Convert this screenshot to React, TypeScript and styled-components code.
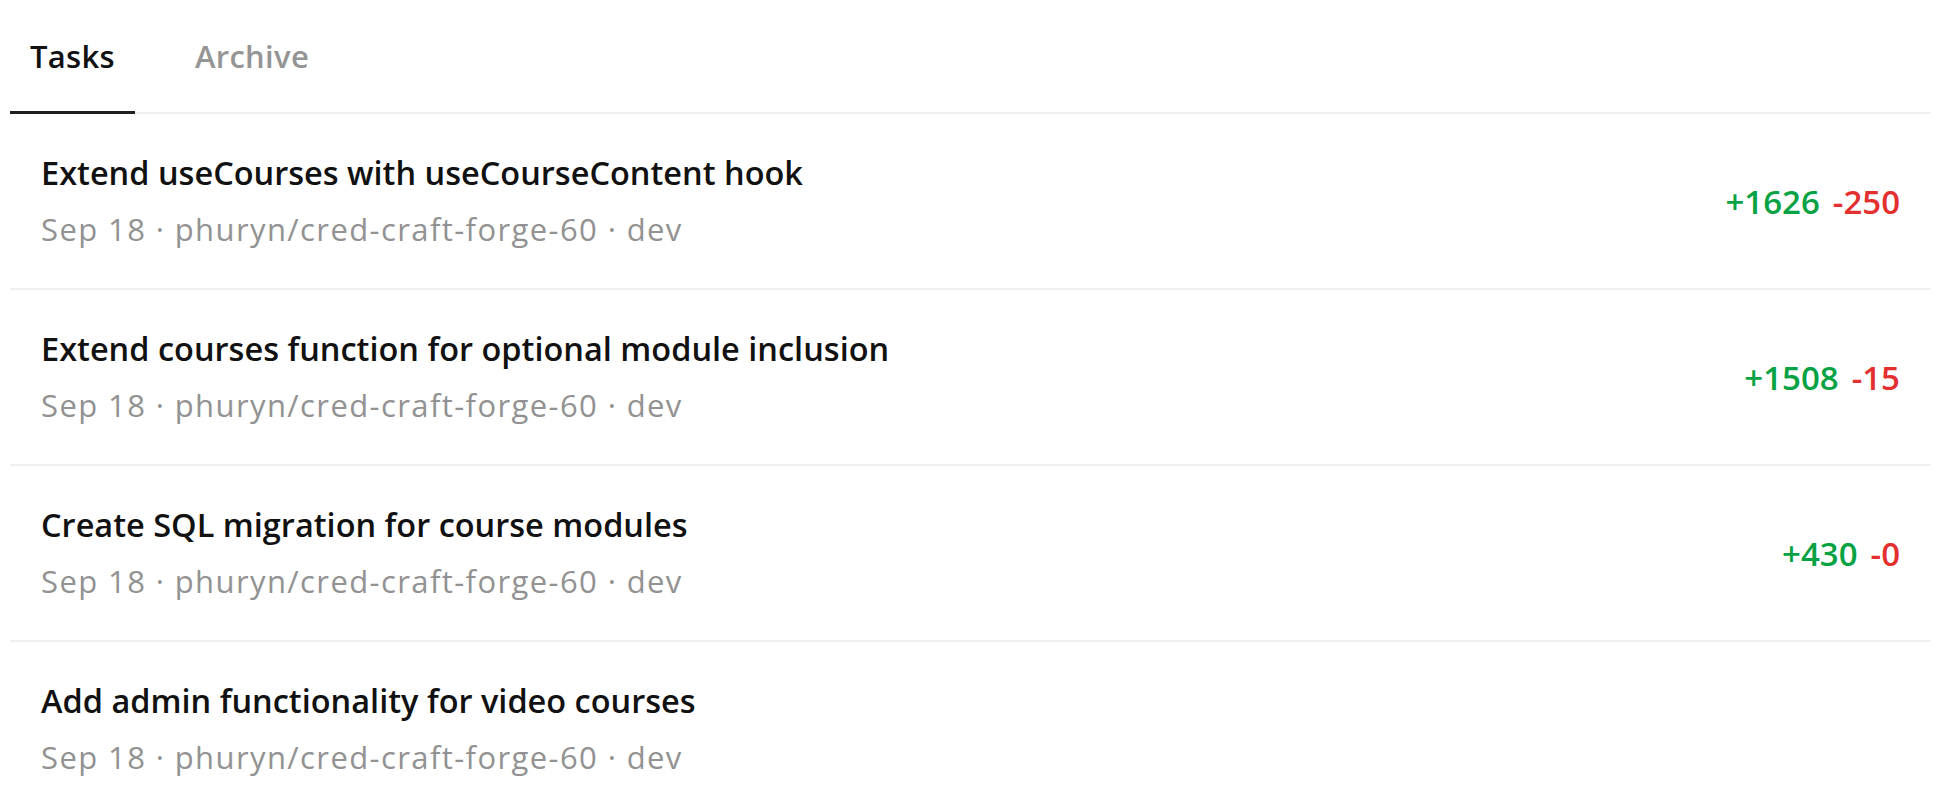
import styled, { createGlobalStyle } from 'styled-components'

const GlobalStyle = createGlobalStyle`
  html, body {
    margin: 0;
    padding: 0;
    background: #ffffff;
    overflow: hidden;
  }
  body {
    font-family: 'Open Sans', 'Noto Sans', 'Liberation Sans', sans-serif;
    color: #111111;
  }
`

interface TaskInterface {
  title: string
  date: string
  repo: string
  branch: string
  added?: number
  removed?: number
}

const tasks: Array<TaskInterface> = [
  { title: 'Extend useCourses with useCourseContent hook', date: 'Sep 18', repo: 'phuryn/cred-craft-forge-60', branch: 'dev', added: 1626, removed: 250 },
  { title: 'Extend courses function for optional module inclusion', date: 'Sep 18', repo: 'phuryn/cred-craft-forge-60', branch: 'dev', added: 1508, removed: 15 },
  { title: 'Create SQL migration for course modules', date: 'Sep 18', repo: 'phuryn/cred-craft-forge-60', branch: 'dev', added: 430, removed: 0 },
  { title: 'Add admin functionality for video courses', date: 'Sep 18', repo: 'phuryn/cred-craft-forge-60', branch: 'dev' },
]

const Page = styled.div`
  padding-left: 10px;
  width: 1921px;
`

const TabBar = styled.div`
  display: flex;
  gap: 40px;
  border-bottom: 2px solid #f0f0f0;
`

const Tab = styled.div<{ $active?: boolean }>`
  height: 111px;
  display: flex;
  align-items: center;
  padding: 0 20px;
  margin-bottom: -2px;
  font-size: 31px;
  font-weight: 600;
  letter-spacing: 0.3px;
  color: ${(p) => (p.$active ? '#111111' : '#959595')};
  border-bottom: 3px solid ${(p) => (p.$active ? '#1f1f1f' : 'transparent')};
`

const TaskList = styled.div`
  display: flex;
  flex-direction: column;
`

const TaskRow = styled.div`
  display: flex;
  align-items: center;
  justify-content: space-between;
  height: 176px;
  padding: 0 31px 0 31px;
  border-bottom: 2px solid #f0f0f0;
  box-sizing: border-box;
`

const TaskInfo = styled.div`
  display: flex;
  flex-direction: column;
  gap: 12px;
`

const TaskTitle = styled.div`
  font-size: 32.5px;
  font-weight: 600;
  line-height: 44px;
  color: #111111;
`

const TaskMeta = styled.div`
  font-size: 31px;
  letter-spacing: 1.4px;
  line-height: 44px;
  color: #929292;
`

const Stats = styled.div`
  display: flex;
  gap: 13px;
  font-size: 33px;
  font-weight: 600;
`

const Added = styled.span`
  color: #06a243;
`

const Removed = styled.span`
  color: #e3302f;
`

const App = () => {
  return (
    <>
      <GlobalStyle />
      <Page>
        <TabBar>
          <Tab $active>Tasks</Tab>
          <Tab>Archive</Tab>
        </TabBar>
        <TaskList>
          {tasks.map((task, id) => (
            <TaskRow key={id}>
              <TaskInfo>
                <TaskTitle>{task.title}</TaskTitle>
                <TaskMeta>
                  {task.date} · {task.repo} · {task.branch}
                </TaskMeta>
              </TaskInfo>
              {task.added !== undefined && (
                <Stats>
                  <Added>+{task.added}</Added>
                  <Removed>-{task.removed}</Removed>
                </Stats>
              )}
            </TaskRow>
          ))}
        </TaskList>
      </Page>
    </>
  )
}

export default App
